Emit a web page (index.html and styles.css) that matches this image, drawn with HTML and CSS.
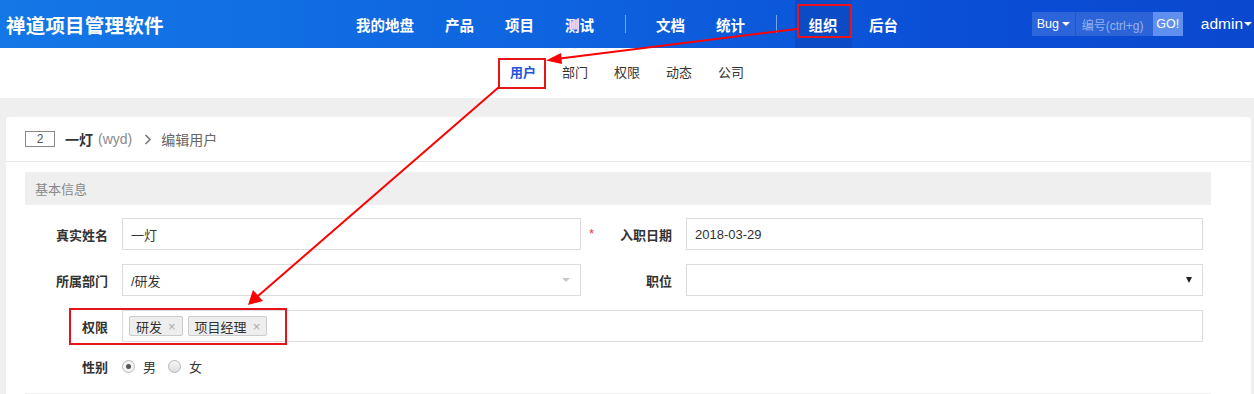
FILE: index.html
```html
<!DOCTYPE html>
<html lang="zh-CN">
<head>
<meta charset="utf-8">
<title>编辑用户 - 禅道项目管理软件</title>
<link rel="stylesheet" href="styles.css">
</head>
<body>
<div class="page">
  <header class="topbar">
    <div class="brand">禅道项目管理软件</div>
    <nav class="mainnav">
      <a class="nav-item">我的地盘</a>
      <a class="nav-item">产品</a>
      <a class="nav-item">项目</a>
      <a class="nav-item">测试</a>
      <span class="nav-divider"></span>
      <a class="nav-item">文档</a>
      <a class="nav-item">统计</a>
      <span class="nav-divider"></span>
      <a class="nav-item active">组织</a>
      <a class="nav-item">后台</a>
    </nav>
    <div class="tools">
      <div class="search">
        <span class="search-type">Bug <span class="caret-w"></span></span>
        <span class="search-input">编号(ctrl+g)</span>
        <span class="search-go">GO!</span>
      </div>
      <span class="user">admin<span class="caret-w"></span></span>
    </div>
  </header>

  <nav class="subnav">
    <a class="sub-item active">用户</a>
    <a class="sub-item">部门</a>
    <a class="sub-item">权限</a>
    <a class="sub-item">动态</a>
    <a class="sub-item">公司</a>
  </nav>

  <main class="main">
    <section class="card">
      <div class="card-head">
        <span class="id-box">2</span>
        <strong class="uname">一灯</strong>
        <span class="account">(wyd)</span>
        <span class="chev">
          <svg width="8" height="11" viewBox="0 0 8 11"><path d="M1.5 1 L6 5.5 L1.5 10" fill="none" stroke="#777" stroke-width="1.6"/></svg>
        </span>
        <span class="crumb">编辑用户</span>
      </div>
      <div class="card-body">
        <div class="section-bar">基本信息</div>
        <div class="form">
          <label class="f-label">真实姓名</label>
          <div class="f-input">一灯</div>
          <div class="f-mid"><span class="star">*</span><label class="f-label2">入职日期</label></div>
          <div class="f-input">2018-03-29</div>

          <label class="f-label">所属部门</label>
          <div class="f-input f-select">/研发<span class="caret-light"></span></div>
          <div class="f-mid"><label class="f-label2">职位</label></div>
          <div class="f-input f-select"><span class="caret-dark"></span></div>

          <label class="f-label">权限</label>
          <div class="f-input f-tags">
            <span class="tag">研发<span class="tag-x">×</span></span>
            <span class="tag">项目经理<span class="tag-x">×</span></span>
          </div>

          <label class="f-label">性别</label>
          <div class="f-radios">
            <span class="radio checked"></span><span class="r-text">男</span>
            <span class="radio"></span><span class="r-text">女</span>
          </div>
        </div>
        <div class="section-bar next"></div>
      </div>
    </section>
  </main>

  <svg class="annot" width="1254" height="394" viewBox="0 0 1254 394">
    <rect x="798" y="5" width="53" height="32" fill="none" stroke="#e8141b" stroke-width="2"/>
    <rect x="499" y="59" width="46" height="29" fill="none" stroke="#e8141b" stroke-width="2"/>
    <rect x="70" y="309" width="216" height="35" fill="none" stroke="#e8141b" stroke-width="2"/>
    <line x1="797" y1="29" x2="560" y2="58.5" stroke="#f00" stroke-width="2"/>
    <polygon points="546,60.5 561,53 562,64" fill="#f00"/>
    <line x1="499" y1="87" x2="258" y2="296" stroke="#f00" stroke-width="2"/>
    <polygon points="248,305 253,290 263,301" fill="#f00"/>
  </svg>
</div>
</body>
</html>
```
FILE: styles.css
```css
* { box-sizing: border-box; }
html, body { margin: 0; padding: 0; }
body {
  width: 1254px;
  height: 394px;
  overflow: hidden;
  font-family: "Liberation Sans", "Noto Sans CJK SC", sans-serif;
  font-size: 13px;
  color: #333;
  background: #efefef;
}
.page { position: relative; width: 1254px; height: 394px; overflow: hidden; }

/* top bar */
.topbar {
  height: 48px;
  display: grid;
  grid-template-columns: 1fr auto 1fr;
  align-items: center;
  background: linear-gradient(to right, #1477e6 0%, #0e63df 45%, #0a4fd6 75%, #0a48cf 100%);
  color: #fff;
}
.brand {
  padding-left: 6px;
  font-size: 19.5px;
  font-weight: bold;
  letter-spacing: 0.2px;
}
.mainnav { display: flex; align-items: stretch; height: 48px; }
.nav-item {
  display: flex;
  align-items: center;
  padding: 0 15.5px;
  font-size: 14.5px;
  font-weight: bold;
  color: #fff;
}
.nav-item.active { background: #0b4cc6; padding: 0 14px; margin: 0 2px 0 3px; }
.nav-divider {
  width: 1px;
  height: 18px;
  align-self: center;
  margin: 0 15px;
  background: rgba(255,255,255,0.45);
}
.tools { display: flex; justify-content: flex-end; align-items: center; padding-right: 2px; }
.search { display: flex; height: 24px; margin-right: 18px; font-size: 12.5px; }
.search-type {
  width: 43px;
  display: flex; align-items: center; justify-content: center; gap: 3px;
  background: rgba(255,255,255,0.14);
  color: #fff;
}
.search-input {
  width: 78px;
  display: flex; align-items: center;
  padding-left: 6px;
  background: rgba(255,255,255,0.14);
  border-left: 1px solid rgba(0,0,40,0.15);
  color: rgba(255,255,255,0.5);
  font-size: 12px;
}
.search-go {
  width: 30px;
  display: flex; align-items: center; justify-content: center;
  background: #5f8fef;
  color: #fff;
  font-size: 12.5px;
}
.caret-w {
  display: inline-block;
  width: 0; height: 0;
  border-left: 4px solid transparent;
  border-right: 4px solid transparent;
  border-top: 4px solid #fff;
  vertical-align: middle;
}
.user { font-size: 15.5px; color: #fff; display: flex; align-items: center; gap: 1px; }

/* sub nav */
.subnav {
  height: 50px;
  background: #fff;
  display: flex;
  justify-content: center;
  align-items: center;
  padding-bottom: 3px;
}
.sub-item { padding: 0 13px; font-size: 13px; color: #333; }
.sub-item.active { color: #1f56d8; font-weight: bold; }

/* main */
.main { padding: 19px 3px 0 6px; }
.card { background: #fff; border-radius: 4px 4px 0 0; height: 277px; overflow: hidden; }
.card-head {
  height: 45px;
  display: flex;
  align-items: center;
  padding-left: 19px;
  border-bottom: 1px solid #e8e8e8;
}
.id-box {
  width: 30px; height: 16px;
  border: 1px solid #888;
  display: flex; align-items: center; justify-content: center;
  font-size: 12px; color: #555;
  margin-right: 10px;
}
.uname { font-size: 14px; color: #333; margin-right: 5px; }
.account { color: #8a8a8a; font-size: 14px; }
.chev { display: flex; align-items: center; margin: 0 9px 0 12px; }
.crumb { color: #666; font-size: 14px; }

.card-body { padding: 10px 40px 0 19px; }
.section-bar {
  height: 33px;
  background: #efefef;
  color: #888;
  padding-left: 10px;
  display: flex;
  align-items: center;
  font-size: 13px;
}
.section-bar.next { margin-top: 17px; }

.form {
  display: grid;
  grid-template-columns: 97px 459px 105px 517px;
  grid-template-rows: 32px 32px 32px 20px;
  row-gap: 14px;
  margin-top: 13px;
}
.f-label, .f-label2 {
  font-weight: bold;
  color: #333;
  text-align: right;
  padding-right: 14px;
  align-self: center;
}
.f-mid { display: flex; align-items: center; justify-content: space-between; }
.star { color: #e34; padding-left: 8px; font-size: 13px; position: relative; top: -1px; }
.f-label2 { margin-left: auto; }
.f-input {
  border: 1px solid #dcdcdc;
  display: flex;
  align-items: center;
  padding-left: 8px;
  color: #333;
  font-size: 13px;
  position: relative;
}
.f-select { justify-content: space-between; padding-right: 8px; }
.caret-light {
  width: 0; height: 0;
  border-left: 4px solid transparent;
  border-right: 4px solid transparent;
  border-top: 4px solid #c8c8c8;
  margin-right: 2px;
}
.caret-dark {
  margin-left: auto;
  width: 0; height: 0;
  border-left: 3.5px solid transparent;
  border-right: 3.5px solid transparent;
  border-top: 6px solid #222;
  margin-right: 2px;
}
.f-tags { grid-column: 2 / 5; padding-left: 6px; gap: 5px; }
.tag {
  display: flex; align-items: center;
  height: 20px;
  padding: 0 6px 0 6px;
  background: #eee;
  border: 1px solid #ccc;
  border-radius: 2px;
  font-size: 13px;
  color: #333;
}
.tag-x { color: #aaa; margin-left: 6px; font-size: 13px; }
.f-radios { display: flex; align-items: center; grid-column: 2 / 5; }
.radio {
  width: 13px; height: 13px;
  border: 1px solid #b8b8b8;
  border-radius: 50%;
  background: linear-gradient(#f6f6f6, #dedede);
  display: inline-block;
  position: relative;
}
.radio.checked { background: #f4f4f4; }
.radio.checked::after {
  content: "";
  position: absolute;
  left: 3px; top: 3px;
  width: 5px; height: 5px;
  border-radius: 50%;
  background: #555;
}
.r-text { margin: 0 12px 0 8px; color: #333; }

.annot { position: absolute; left: 0; top: 0; pointer-events: none; }
```
